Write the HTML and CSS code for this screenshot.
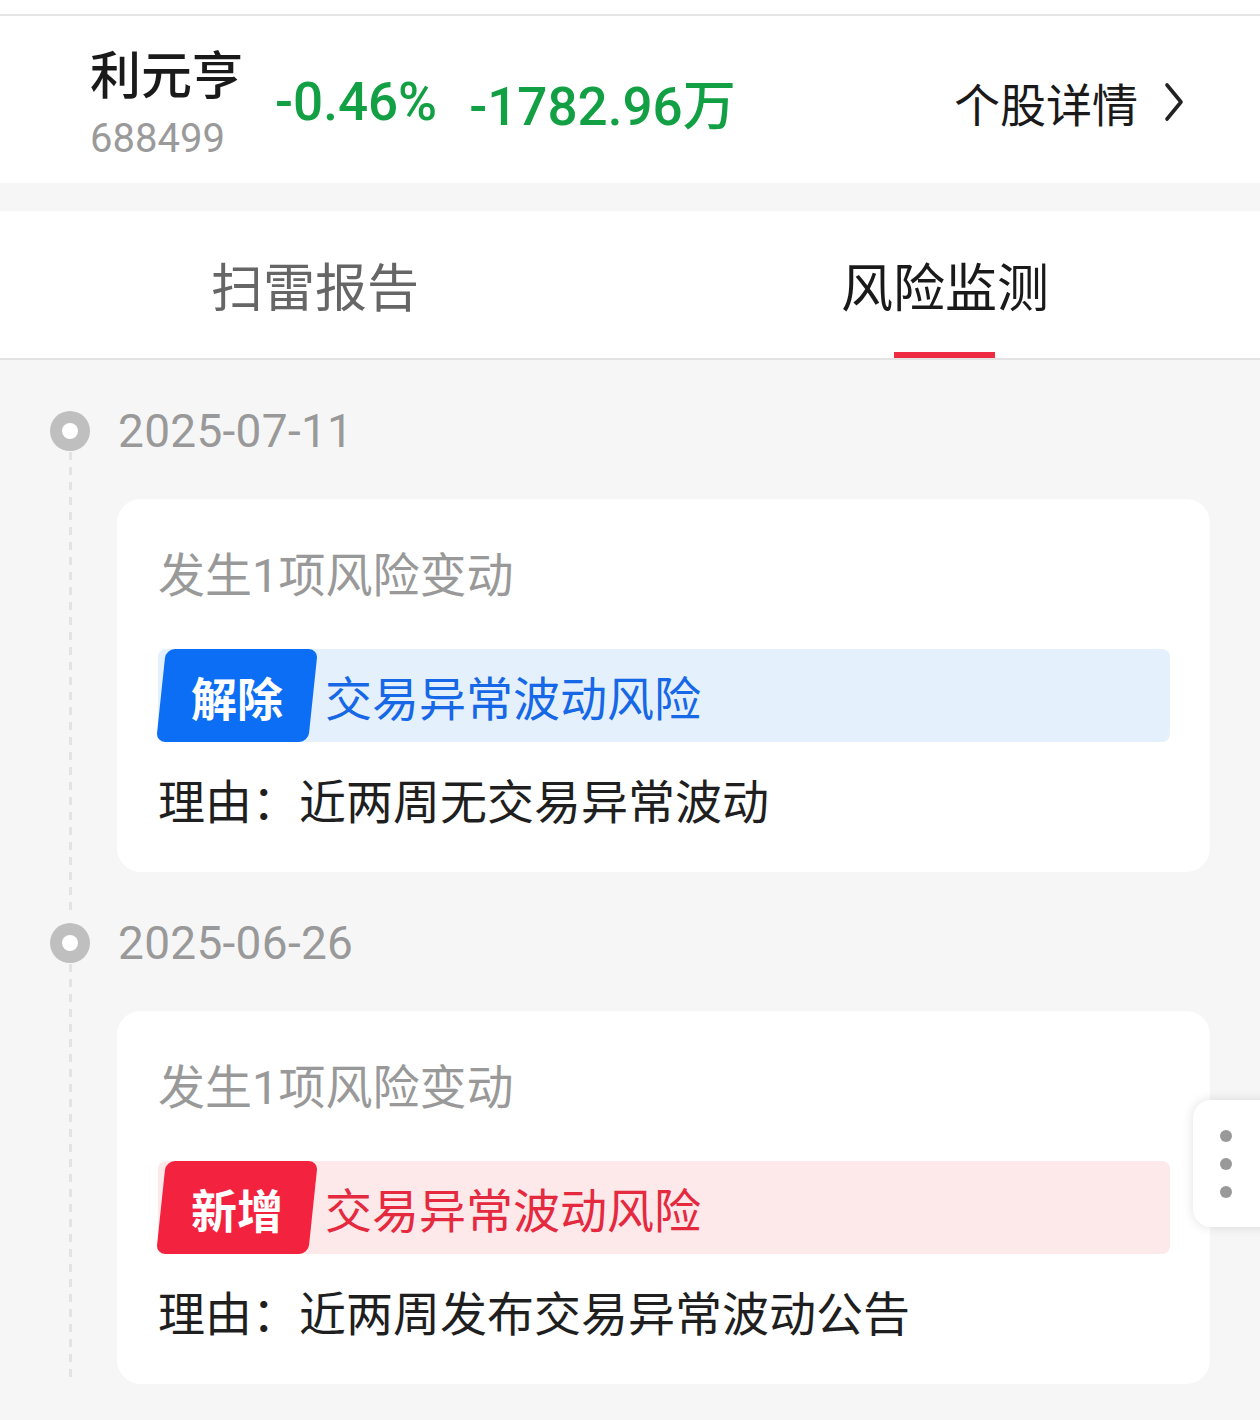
FILE: index.html
```html
<!DOCTYPE html>
<html lang="zh-CN">
<head>
  <meta charset="UTF-8">
  <title>风险监测</title>
  <link rel="stylesheet" href="styles.css">
</head>
<body>
  <div class="topbar"></div>

  <div class="stock">
    <div class="stock-name">
      <div class="name">利元亨</div>
      <div class="code">688499</div>
    </div>
    <div class="quote">-0.46%</div>
    <div class="quote">-1782.96万</div>
    <a class="detail">个股详情
      <svg class="chev" width="20" height="40" viewBox="0 0 20 40">
        <path d="M3 3 L17 20 L3 37" fill="none" stroke="#222" stroke-width="3.6" stroke-linecap="round" stroke-linejoin="round"/>
      </svg>
    </a>
  </div>

  <div class="tabs">
    <div class="tab">扫雷报告</div>
    <div class="tab active">风险监测</div>
  </div>

  <div class="timeline">
    <div class="item">
      <div class="rail">
        <div class="dot-row"><span class="dot"></span></div>
        <div class="line"></div>
      </div>
      <div class="content">
        <div class="date">2025-07-11</div>
        <div class="card">
          <div class="card-title">发生1项风险变动</div>
          <div class="risk blue">
            <span class="badge">解除</span>
            <span class="risk-name">交易异常波动风险</span>
          </div>
          <div class="reason">理由：<span>近两周无交易异常波动</span></div>
        </div>
      </div>
    </div>

    <div class="item">
      <div class="rail">
        <div class="dot-row"><span class="dot"></span></div>
        <div class="line"></div>
      </div>
      <div class="content">
        <div class="date">2025-06-26</div>
        <div class="card">
          <div class="card-title">发生1项风险变动</div>
          <div class="risk red">
            <span class="badge">新增</span>
            <span class="risk-name">交易异常波动风险</span>
          </div>
          <div class="reason">理由：<span>近两周发布交易异常波动公告</span></div>
        </div>
      </div>
    </div>
  </div>

  <div class="more">
    <span></span><span></span><span></span>
  </div>
</body>
</html>
```

FILE: styles.css
```css
* {
  box-sizing: border-box;
}

body {
  margin: 0;
  background-color: #f6f6f6;
  font-family: Roboto, "Noto Sans CJK SC", sans-serif;
  color: #1a1a1a;
  position: relative;
  min-height: 1420px;
}

.topbar {
  height: 16px;
  background: #fff;
  border-bottom: 2px solid #e6e6e6;
}

.stock {
  height: 167px;
  background: #fff;
  display: flex;
  align-items: center;
  padding: 0 76px 0 90px;
  gap: 32px;
}

.stock-name {
  display: flex;
  flex-direction: column;
  margin-top: 11px;
}

.name {
  font-size: 51px;
  line-height: 60px;
  font-weight: 500;
  color: #1a1a1a;
}

.code {
  font-size: 40px;
  line-height: 50px;
  margin-top: 7px;
  color: #9a9a9a;
}

.quote {
  font-size: 53px;
  font-weight: 500;
  color: #13a044;
  margin-top: 4px;
}

.detail {
  margin-left: auto;
  display: flex;
  align-items: center;
  gap: 26px;
  font-size: 46px;
  color: #1a1a1a;
  margin-top: 4px;
}

.chev {
  display: block;
}

.tabs {
  margin-top: 28px;
  background: #fff;
  height: 149px;
  border-bottom: 2px solid #e3e3e3;
  display: flex;
}

.tab {
  flex: 1;
  display: flex;
  align-items: center;
  justify-content: center;
  font-size: 52px;
  color: #666;
  position: relative;
}

.tab.active {
  color: #1a1a1a;
}

.tab.active::after {
  content: "";
  position: absolute;
  bottom: 0;
  left: 50%;
  width: 101px;
  margin-left: -51px;
  height: 6px;
  background: #ef2b42;
}

.timeline {
  padding: 40px 50px 0 50px;
}

.item {
  display: flex;
  gap: 27px;
  padding-bottom: 40px;
}

.item:last-child {
  padding-bottom: 34px;
}

.rail {
  width: 40px;
  display: flex;
  flex-direction: column;
  align-items: center;
}

.dot-row {
  height: 62px;
  display: flex;
  align-items: center;
}

.dot {
  width: 40px;
  height: 40px;
  border-radius: 50%;
  background: #bfbfbf;
  display: flex;
  align-items: center;
  justify-content: center;
}

.dot::after {
  content: "";
  width: 16px;
  height: 16px;
  border-radius: 50%;
  background: #fff;
}

.line {
  flex: 1;
  width: 3px;
  margin-top: -10px;
  margin-bottom: -40px;
  background: repeating-linear-gradient(to bottom, #e3e3e3 0 8px, transparent 8px 15px);
}

.item:last-child .line {
  margin-bottom: 0;
}

.content {
  flex: 1;
}

.date {
  height: 62px;
  line-height: 62px;
  font-size: 46px;
  color: #999;
  padding-left: 1px;
  letter-spacing: 0.3px;
}

.card {
  margin-top: 37px;
  background: #fff;
  border-radius: 24px;
  padding: 47px 40px 39px 41px;
}

.card-title {
  font-size: 47px;
  line-height: 60px;
  color: #999;
}

.risk {
  margin-top: 43px;
  height: 93px;
  border-radius: 8px;
  display: flex;
  align-items: center;
}

.risk.blue {
  background: #e5f0fd;
  color: #1668e6;
}

.risk.red {
  background: #fde8ea;
  color: #e5293f;
}

.badge {
  width: 152px;
  height: 93px;
  display: flex;
  align-items: center;
  justify-content: center;
  font-size: 46px;
  font-weight: 700;
  color: #fff;
  position: relative;
  z-index: 0;
  margin-left: 3px;
}

.badge::before {
  content: "";
  position: absolute;
  inset: 0;
  border-radius: 9px;
  transform: skewX(-6deg);
  z-index: -1;
}

.blue .badge::before {
  background: #0b6ef4;
}

.red .badge::before {
  background: #f3233f;
}

.risk-name {
  font-size: 47px;
  margin-left: 12px;
}

.reason {
  margin-top: 31px;
  font-size: 47px;
  line-height: 60px;
  color: #1f1f1f;
}

.more {
  position: absolute;
  top: 1100px;
  left: 1193px;
  width: 80px;
  height: 127px;
  background: #fff;
  border-radius: 18px 0 0 18px;
  box-shadow: 0 0 12px rgba(0, 0, 0, 0.12);
  display: flex;
  flex-direction: column;
  align-items: center;
  justify-content: center;
  gap: 16px;
  padding-right: 14px;
}

.more span {
  width: 12px;
  height: 12px;
  border-radius: 50%;
  background: #999;
}
```
